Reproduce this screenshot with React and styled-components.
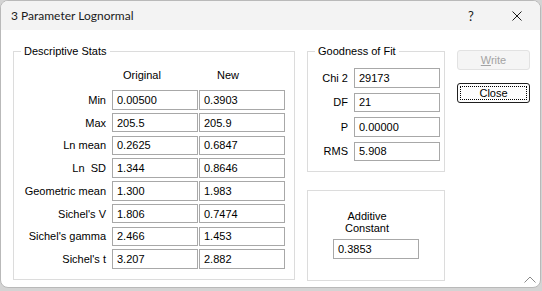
import React from 'react';
import styled, { createGlobalStyle } from 'styled-components';

const Global = createGlobalStyle`
  html, body { margin: 0; padding: 0; background: #d4d4d4; }
  body { width: 542px; height: 291px; overflow: hidden; }
`;

const Window = styled.div`
  position: relative;
  width: 541px;
  height: 288px;
  box-sizing: border-box;
  border: 1px solid #b9b9b9;
  border-radius: 8px;
  overflow: hidden;
  background: #ffffff;
  display: flex;
  flex-direction: column;
  font-family: "Liberation Sans", Arial, sans-serif;
  font-size: 11px;
  color: #000;
`;

const TitleBar = styled.div`
  height: 29px;
  flex: none;
  background: #f3f3f3;
  display: flex;
  align-items: center;
  padding-left: 10px;
  font-family: Lato, "Noto Sans", sans-serif;
  font-size: 12px;
  color: #1b1b1b;
`;

const Title = styled.div`
  flex: 1;
`;

const TitleButton = styled.div`
  width: 46px;
  height: 29px;
  display: flex;
  align-items: center;
  justify-content: center;
  font-size: ${p => p.$size || 14}px;
`;

const Body = styled.div`
  flex: 1;
  display: flex;
  align-items: flex-start;
  padding: 14px 0 0 12px;
`;

const Group = styled.fieldset`
  margin: 0;
  padding: ${p => p.$pad || '0'};
  min-width: 0;
  box-sizing: border-box;
  width: ${p => p.$w}px;
  height: ${p => p.$h}px;
  border: 1px solid #dcdcdc;
`;

const Legend = styled.legend`
  margin-left: 7px;
  padding: 0 3px;
  line-height: 14px;
  font-size: 11px;
`;

const StatsGrid = styled.div`
  display: grid;
  grid-template-columns: 98px 87px 86px;
  grid-auto-rows: 19.5px;
  row-gap: 3.25px;
  padding-top: 8px;
`;

const HeaderRow = styled.div`
  display: grid;
  grid-template-columns: 98px 87px 86px;
  height: 14px;
  line-height: 14px;
  margin-top: 10px;
`;

const Header = styled.div`
  padding-left: ${p => p.$offset}px;
`;

const Label = styled.div`
  display: flex;
  align-items: center;
  justify-content: flex-end;
  padding-right: 6px;
  white-space: pre;
`;

const Field = styled.div`
  box-sizing: border-box;
  width: 86px;
  height: ${p => p.$h || 19.5}px;
  border: 1px solid #a8a8a8;
  display: flex;
  align-items: center;
  padding-left: 4px;
  color: #000;
  background: #fff;
`;

const FitGrid = styled.div`
  display: grid;
  grid-template-columns: 46px 86px;
  grid-auto-rows: 19.5px;
  row-gap: 5px;
  padding-top: 10px;
`;

const Column = styled.div`
  display: flex;
  flex-direction: column;
  gap: ${p => p.$gap}px;
  margin-left: ${p => p.$ml}px;
  padding-top: ${p => p.$pt || 0}px;
`;

const PlainGroup = styled.div`
  box-sizing: border-box;
  width: 138px;
  height: 91px;
  border: 1px solid #dcdcdc;
  display: flex;
  flex-direction: column;
  align-items: flex-start;
  padding: 19px 0 0 25px;
`;

const CenterText = styled.div`
  width: 96px;
  margin-left: -14px;
  text-align: center;
  line-height: 12px;
  margin-bottom: 5px;
`;

const Button = styled.div`
  box-sizing: border-box;
  width: 73px;
  height: 20px;
  border-radius: 3px;
  display: flex;
  align-items: center;
  justify-content: center;
  background: ${p => (p.$disabled ? '#f5f5f5' : '#fdfdfd')};
  border: 1px solid ${p => (p.$disabled ? '#e2e2e2' : '#1f1f1f')};
  color: ${p => (p.$disabled ? '#a3a3a3' : '#000')};
  position: relative;
  u { text-decoration: underline; }
`;

const Focus = styled.span`
  position: absolute;
  inset: 2px;
  border: 1px dotted #000;
  pointer-events: none;
`;

const Grip = styled.svg`
  position: absolute;
  right: 4px;
  bottom: 4px;
`;

const stats = [
  ['Min', '0.00500', '0.3903'],
  ['Max', '205.5', '205.9'],
  ['Ln mean', '0.2625', '0.6847'],
  ['Ln  SD', '1.344', '0.8646'],
  ['Geometric mean', '1.300', '1.983'],
  ["Sichel's V", '1.806', '0.7474'],
  ["Sichel's gamma", '2.466', '1.453'],
  ["Sichel's t", '3.207', '2.882'],
];

const fit = [
  ['Chi 2', '29173'],
  ['DF', '21'],
  ['P', '0.00000'],
  ['RMS', '5.908'],
];

export default function App() {
  return (
    <>
      <Global />
      <Window>
        <TitleBar>
          <Title>3 Parameter Lognormal</Title>
          <TitleButton $size={13}>?</TitleButton>
          <TitleButton>
            <svg width="10" height="10" viewBox="0 0 10 10">
              <path d="M0.5 0.5 L9.5 9.5 M9.5 0.5 L0.5 9.5" stroke="#1b1b1b" strokeWidth="1" />
            </svg>
          </TitleButton>
        </TitleBar>
        <Body>
          <Group $w={282} $h={236} $pad="0 9px 0 0">
            <Legend>Descriptive Stats</Legend>
            <HeaderRow>
              <div />
              <Header $offset={11}>Original</Header>
              <Header $offset={18}>New</Header>
            </HeaderRow>
            <StatsGrid>
              {stats.map(([l, a, b]) => (
                <React.Fragment key={l}>
                  <Label>{l}</Label>
                  <Field>{a}</Field>
                  <Field>{b}</Field>
                </React.Fragment>
              ))}
            </StatsGrid>
          </Group>
          <Column $gap={18} $ml={12}>
            <Group $w={138} $h={128}>
              <Legend>Goodness of Fit</Legend>
              <FitGrid>
                {fit.map(([l, v]) => (
                  <React.Fragment key={l}>
                    <Label>{l}</Label>
                    <Field>{v}</Field>
                  </React.Fragment>
                ))}
              </FitGrid>
            </Group>
            <PlainGroup>
              <CenterText>
                Additive
                <br />
                Constant
              </CenterText>
              <Field $h={20}>0.3853</Field>
            </PlainGroup>
          </Column>
          <Column $gap={13} $ml={12} $pt={6}>
            <Button $disabled>
              <span><u>W</u>rite</span>
            </Button>
            <Button>
              Close
              <Focus />
            </Button>
          </Column>
        </Body>
        <Grip width="12" height="7" viewBox="0 0 12 7">
          <path d="M0.5 6.5 L6 1 L11.5 6.5" fill="none" stroke="#8a8a8a" strokeWidth="1" />
        </Grip>
      </Window>
    </>
  );
}
